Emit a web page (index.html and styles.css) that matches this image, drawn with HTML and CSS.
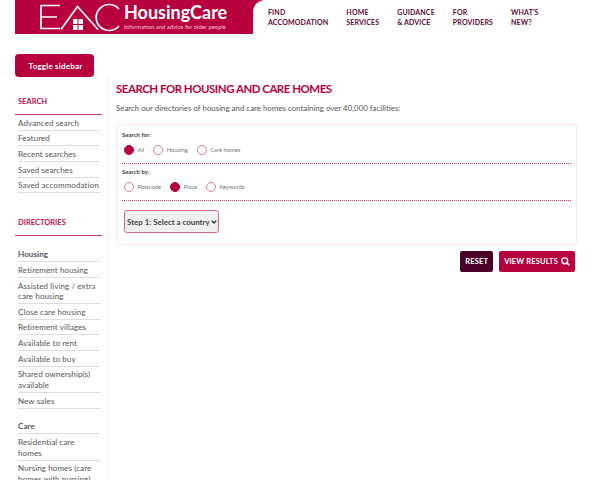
FILE: index.html
```html
<!DOCTYPE html>
<html lang="en">
<head>
<meta charset="utf-8">
<title>Search for housing and care homes</title>
<link rel="stylesheet" href="styles.css">
</head>
<body>
<header class="top">
  <a class="logo" href="#">
    <svg class="mark" width="82" height="30" viewBox="0 0 82 30" aria-hidden="true">
      <g fill="none" stroke="#fff" stroke-width="1.700">
        <path d="M20 3.500H1V26.500H20M1 15H17"/>
        <path d="M21 27.500L37.500 4.500L58 27.500"/>
        <path d="M79 7A13 13 0 1 0 79 24"/>
      </g>
      <g fill="#fff">
        <rect x="33" y="17" width="4.500" height="5"/><rect x="38.500" y="17" width="4.500" height="5"/>
        <rect x="33" y="23" width="4.500" height="5"/><rect x="38.500" y="23" width="4.500" height="5"/>
      </g>
    </svg>
    <span class="brand">
      <span class="brand-name">HousingCare</span>
      <span class="brand-tag">Information and advice for older people</span>
    </span>
  </a>
  <div class="nav-wrap">
    <nav class="nav">
      <a href="#">FIND<br>ACCOMODATION</a>
      <a href="#">HOME<br>SERVICES</a>
      <a href="#">GUIDANCE<br>&amp; ADVICE</a>
      <a href="#">FOR<br>PROVIDERS</a>
      <a href="#">WHAT'S<br>NEW?</a>
    </nav>
  </div>
</header>
<button class="toggle" type="button">Toggle sidebar</button>
<div class="layout">
  <aside class="sidebar">
    <h2 class="side-title">SEARCH</h2>
    <ul class="side-list">
      <li>Advanced search</li>
      <li>Featured</li>
      <li>Recent searches</li>
      <li>Saved searches</li>
      <li>Saved accommodation</li>
    </ul>
    <h2 class="side-title side-title-gap">DIRECTORIES</h2>
    <ul class="side-list side-list-gap">
      <li class="strong">Housing</li>
      <li>Retirement housing</li>
      <li>Assisted living / extra care housing</li>
      <li>Close care housing</li>
      <li>Retirement villages</li>
      <li>Available to rent</li>
      <li>Available to buy</li>
      <li>Shared ownership(s) available</li>
      <li>New sales</li>
    </ul>
    <ul class="side-list side-list-next">
      <li class="strong">Care</li>
      <li>Residential care homes</li>
      <li>Nursing homes (care homes with nursing)</li>
    </ul>
  </aside>
  <main class="main">
    <h1 class="title">SEARCH FOR HOUSING AND CARE HOMES</h1>
    <p class="intro">Search our directories of housing and care homes containing over 40,000 facilities:</p>
    <form class="panel">
      <fieldset class="group">
        <div class="label">Search for:</div>
        <div class="radios">
          <label class="radio"><span class="dot on"></span>All</label>
          <label class="radio"><span class="dot"></span>Housing</label>
          <label class="radio"><span class="dot"></span>Care homes</label>
        </div>
      </fieldset>
      <fieldset class="group">
        <div class="label">Search by:</div>
        <div class="radios">
          <label class="radio"><span class="dot"></span>Postcode</label>
          <label class="radio"><span class="dot on"></span>Place</label>
          <label class="radio"><span class="dot"></span>Keywords</label>
        </div>
      </fieldset>
      <div class="select-wrap">
        <select class="country"><option>Step 1: Select a country</option></select>
        <svg class="chev" width="6" height="4" viewBox="0 0 6 4" aria-hidden="true"><path d="M.7.700L3 3L5.300.700" fill="none" stroke="#333" stroke-width="1.300"/></svg>
      </div>
    </form>
    <div class="actions">
      <button class="btn btn-dark" type="button">RESET</button>
      <button class="btn" type="button">VIEW RESULTS
        <svg width="9" height="9" viewBox="0 0 10 10" aria-hidden="true"><circle cx="4.200" cy="4.200" r="3.200" fill="none" stroke="#fff" stroke-width="1.600"/><path d="M6.600 6.600L9.300 9.300" stroke="#fff" stroke-width="1.800"/></svg>
      </button>
    </div>
  </main>
</div>
</body>
</html>
```
FILE: styles.css
```css
* { box-sizing: border-box; }
html, body { height: 100%; overflow: hidden; }
body {
  margin: 0;
  background: #fff;
  color: #444;
  font-family: "Lato", "Liberation Sans", sans-serif;
}
a { color: inherit; text-decoration: none; }
ul { list-style: none; margin: 0; padding: 0; }

.top { display: flex; height: 34px; padding-left: 15px; }
.logo {
  width: 238px;
  display: flex;
  align-items: flex-start;
  gap: 2px;
  padding: 2px 0 0 25px;
  background: #b9003e;
  color: #fff;
}
.mark { flex: none; }
.brand { display: flex; flex-direction: column; }
.brand-name { font-size: 18px; line-height: 21px; font-weight: 700; }
.brand-tag { font-size: 5.900px; line-height: 7px; color: #f3c9d7; white-space: nowrap; }
.nav-wrap {
  flex: 1;
  background: linear-gradient(#b9003e, #b9003e) no-repeat 0 0 / 12px 12px;
}
.nav {
  height: 100%;
  display: flex;
  gap: 18px;
  padding: 8px 0 0 15px;
  background: #fff;
  border-radius: 12px 0 0 0;
  font-size: 7px;
  line-height: 9.500px;
  font-weight: 700;
  letter-spacing: .15px;
  color: #5c0a33;
}
.toggle {
  display: block;
  width: 79px;
  height: 23px;
  margin: 20px 0 0 15px;
  padding: 0 0 0 2px;
  border: 0;
  border-radius: 4px;
  background: #b9003e;
  color: #fff;
  font: 700 8px "Lato", sans-serif;
  letter-spacing: .2px;
}
.layout { display: flex; padding: 0 23px 0 15px; }
.sidebar { width: 93px; flex: none; padding: 19px 5px 0 0; border-right: 1px solid #f6f0f2; }
.side-title { margin: 0; padding: 0 0 7px 3px; border-bottom: 1px solid #d23a6c; color: #c0104d; font-size: 7.500px; line-height: 11px; font-weight: 700; }
.side-title-gap { margin-top: 24px; }
.side-list { padding: 0 2px 0 3px; font-size: 8px; line-height: 10.500px; letter-spacing: .1px; color: #555; }
.side-list li { padding: 2.700px 0 1.500px; border-bottom: 1px solid #ddd; }
.side-list-gap { margin-top: 10px; }
.side-list-next { margin-top: 10px; }
.strong { font-weight: 700; }
.main { flex: 1; padding: 4px 0 0 8px; min-width: 0; }
.title { margin: 0; color: #b9003e; font-size: 11.500px; line-height: 15px; font-weight: 700; letter-spacing: -.5px; }
.intro { margin: 7px 0 0; font-size: 7.900px; line-height: 11px; color: #555; }
.panel { margin-top: 10px; height: 121px; padding: 5px 5px; border: 1px solid #f8e6ec; border-radius: 3px; }
.group { margin: 0 0 3px; padding: 0 0 8px; border: 0; border-bottom: 1px dotted #d23a6c; }
.label { font-size: 6px; line-height: 10px; font-weight: 700; color: #444; }
.radios { display: flex; gap: 9px; margin-top: 5px; padding-left: 2px; }
.radio { display: flex; align-items: center; gap: 3.500px; font-size: 5.800px; line-height: 10px; color: #777; }
.dot { width: 10px; height: 10px; border-radius: 50%; border: 1px solid #dc7a9c; }
.dot.on { background: #b9003e; border-color: #b9003e; }
.select-wrap { position: relative; width: 95px; margin: 9px 0 0 2px; }
.country {
  display: block;
  width: 100%;
  height: 23px;
  padding: 0 0 0 2px;
  border: 1px solid #d6668c;
  border-radius: 3px;
  background: #efefef;
  color: #444;
  font: 700 7.900px "Lato", sans-serif;
  appearance: none;
}
.chev { position: absolute; right: 2px; top: 10px; pointer-events: none; }
.actions { display: flex; justify-content: flex-end; gap: 6px; margin-top: 6px; padding-right: 2px; }
.btn {
  display: flex;
  align-items: center;
  gap: 3px;
  height: 21px;
  padding: 0 5px;
  border: 0;
  border-radius: 2px;
  background: #b9003e;
  color: #fff;
  font: 700 7.500px "Lato", sans-serif;
  letter-spacing: .15px;
}
.btn-dark { background: #4a0027; }
```
